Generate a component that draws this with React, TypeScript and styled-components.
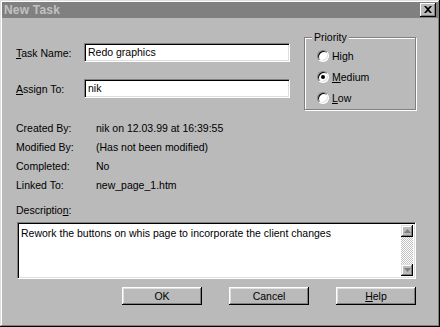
import React from 'react';
import styled, { createGlobalStyle } from 'styled-components';

const FACE = '#bababa';

const GlobalStyle = createGlobalStyle`
  html, body {
    margin: 0;
    padding: 0;
    background: ${FACE};
  }
  body {
    font-family: 'Liberation Sans', Arial, sans-serif;
    font-size: 10.5px;
    color: #000;
  }
`;

const INFO = [
  ['Created By:', 'nik on 12.03.99 at 16:39:55'],
  ['Modified By:', '(Has not been modified)'],
  ['Completed:', 'No'],
  ['Linked To:', 'new_page_1.htm'],
];

function Radio({ checked, children }: { checked?: boolean; children: React.ReactNode }) {
  return (
    <RadioRow>
      <RadioCircle>{checked && <RadioDot />}</RadioCircle>
      <span>{children}</span>
    </RadioRow>
  );
}

function Arrow({ down }: { down?: boolean }) {
  return (
    <ArrowButton>
      <svg width="7" height="5" viewBox="0 0 7 5">
        {down ? (
          <polygon points="0,0 7,0 3.5,4" fill="#808080" />
        ) : (
          <polygon points="0,4 7,4 3.5,0" fill="#808080" />
        )}
      </svg>
    </ArrowButton>
  );
}

export default function App() {
  return (
    <>
      <GlobalStyle />
      <Window>
        <TitleBar>
          <Title>New Task</Title>
          <CloseButton>
            <svg width="8" height="7" viewBox="0 0 8 7">
              <path d="M0 0h2l2 2 2-2h2L5 3.5 8 7H6L4 5 2 7H0l3-3.5z" fill="#000" />
            </svg>
          </CloseButton>
        </TitleBar>
        <Body>
          <TopSection>
            <Fields>
              <FieldRow>
                <Label><Key>T</Key>ask Name:</Label>
                <TextBox>Redo graphics</TextBox>
              </FieldRow>
              <FieldRow>
                <Label><Key>A</Key>ssign To:</Label>
                <TextBox>nik</TextBox>
              </FieldRow>
            </Fields>
            <GroupBox>
              <Legend>Priority</Legend>
              <Radio>High</Radio>
              <Radio checked><Key>M</Key>edium</Radio>
              <Radio><Key>L</Key>ow</Radio>
            </GroupBox>
          </TopSection>

          <InfoList>
            {INFO.map(([k, v]) => (
              <InfoRow key={k}>
                <InfoLabel>{k}</InfoLabel>
                <span>{v}</span>
              </InfoRow>
            ))}
          </InfoList>

          <DescLabel>Descriptio<Key>n</Key>:</DescLabel>
          <Memo>
            <MemoText>Rework the buttons on whis page to incorporate the client changes</MemoText>
            <ScrollBar>
              <Arrow />
              <Track />
              <Arrow down />
            </ScrollBar>
          </Memo>

          <Buttons>
            <Button>OK</Button>
            <Button>Cancel</Button>
            <Button><Key>H</Key>elp</Button>
          </Buttons>
        </Body>
      </Window>
    </>
  );
}

const Window = styled.div`
  width: 440px;
  height: 327px;
  box-sizing: border-box;
  padding: 2px;
  background: ${FACE};
  box-shadow: inset -1px -1px 0 #000, inset 1px 1px 0 #dfdfdf,
    inset -2px -2px 0 #808080, inset 2px 2px 0 #fff;
  display: flex;
  flex-direction: column;
`;

const TitleBar = styled.div`
  height: 16px;
  background: #808080;
  display: flex;
  align-items: center;
  justify-content: space-between;
  padding: 0 2px 0 2px;
`;

const Title = styled.span`
  color: #c2c2c2;
  font-weight: bold;
  font-size: 12px;
  letter-spacing: 0.2px;
`;

const CloseButton = styled.div`
  width: 16px;
  height: 14px;
  box-sizing: border-box;
  background: ${FACE};
  box-shadow: inset -1px -1px 0 #000, inset 1px 1px 0 #fff,
    inset -2px -2px 0 #808080;
  display: flex;
  align-items: center;
  justify-content: center;
  padding-bottom: 1px;
`;

const Body = styled.div`
  display: flex;
  flex-direction: column;
  padding: 19px 22px 0 14px;
`;

const TopSection = styled.div`
  display: flex;
  align-items: flex-start;
`;

const Fields = styled.div`
  display: flex;
  flex-direction: column;
  gap: 17px;
  padding-top: 6px;
`;

const FieldRow = styled.div`
  display: flex;
  align-items: center;
`;

const Label = styled.span`
  width: 68px;
`;

const Key = styled.u`
  text-decoration: underline;
  text-underline-offset: 1px;
`;

const sunken = `
  box-sizing: border-box;
  background: #fff;
  border: 1px solid;
  border-color: #808080 #fff #fff #808080;
  box-shadow: inset 1px 1px 0 #000, inset -1px -1px 0 #dfdfdf;
`;

const TextBox = styled.div`
  ${sunken}
  width: 206px;
  height: 19px;
  padding: 2px 3px;
  line-height: 13px;
`;

const GroupBox = styled.div`
  position: relative;
  margin-left: auto;
  width: 112px;
  height: 73px;
  box-sizing: border-box;
  border: 1px solid #808080;
  box-shadow: inset 1px 1px 0 #fff, 1px 1px 0 #fff;
  padding: 7px 0 0 12px;
  display: flex;
  flex-direction: column;
`;

const Legend = styled.span`
  position: absolute;
  top: -8px;
  left: 7px;
  padding: 0 2px;
  background: ${FACE};
  line-height: 14px;
`;

const RadioRow = styled.div`
  height: 21px;
  display: flex;
  align-items: center;
  gap: 3px;
`;

const RadioCircle = styled.span`
  width: 12px;
  height: 12px;
  box-sizing: border-box;
  border-radius: 50%;
  background: #fff;
  border: 1px solid;
  border-color: #808080 #fff #fff #808080;
  box-shadow: inset 1px 1px 0 #000, inset -1px -1px 0 #dfdfdf;
  display: flex;
  align-items: center;
  justify-content: center;
`;

const RadioDot = styled.span`
  width: 4px;
  height: 4px;
  border-radius: 50%;
  background: #000;
`;

const InfoList = styled.div`
  margin-top: 8px;
  display: flex;
  flex-direction: column;
`;

const InfoRow = styled.div`
  height: 19px;
  display: flex;
  align-items: center;
`;

const InfoLabel = styled.span`
  width: 80px;
`;

const DescLabel = styled.div`
  margin-top: 8px;
  height: 16px;
  display: flex;
  align-items: center;
`;

const Memo = styled.div`
  ${sunken}
  margin: 4px 0 0 1px;
  height: 57px;
  display: flex;
  padding: 2px;
`;

const MemoText = styled.div`
  flex: 1;
  padding: 1px 1px;
  line-height: 14px;
`;

const ScrollBar = styled.div`
  width: 12px;
  display: flex;
  flex-direction: column;
`;

const ArrowButton = styled.div`
  height: 12px;
  box-sizing: border-box;
  background: ${FACE};
  box-shadow: inset -1px -1px 0 #000, inset 1px 1px 0 #dfdfdf,
    inset -2px -2px 0 #808080, inset 2px 2px 0 #fff;
  display: flex;
  align-items: center;
  justify-content: center;
`;

const Track = styled.div`
  flex: 1;
  background-color: #dcdcdc;
  background-image: repeating-conic-gradient(#fff 0% 25%, #c0c0c0 0% 50%);
  background-size: 2px 2px;
`;

const Buttons = styled.div`
  margin-top: 8px;
  display: flex;
  justify-content: flex-end;
  gap: 27px;
`;

const Button = styled.div`
  width: 80px;
  height: 18px;
  box-sizing: border-box;
  background: ${FACE};
  box-shadow: inset -1px -1px 0 #000, inset 1px 1px 0 #fff,
    inset -2px -2px 0 #808080, inset 2px 2px 0 #dfdfdf;
  display: flex;
  align-items: center;
  justify-content: center;
`;
